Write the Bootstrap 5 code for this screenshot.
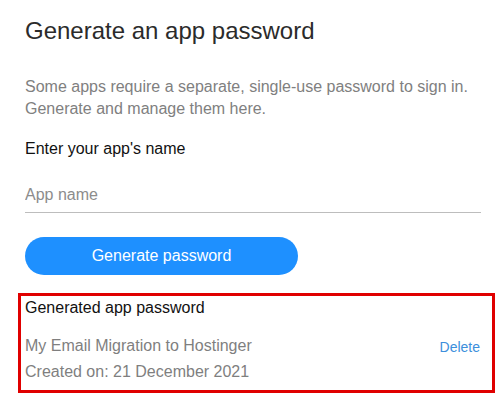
<!DOCTYPE html>
<html lang="en">
<head>
<meta charset="utf-8">
<title>Generate an app password</title>
<link href="https://cdn.jsdelivr.net/npm/bootstrap@5.3.0/dist/css/bootstrap.min.css" rel="stylesheet">
<style>
html,body{height:100%;overflow:hidden}
body{font-family:"Liberation Sans",Arial,sans-serif;background:#fff;color:#111}
.pg{width:503px;height:406px;padding:0 8px 0 18px}
.upper{padding:0 14px 0 7px}
.ttl{font-size:24px;line-height:28px;font-weight:400;color:#2b2b2b;margin:17px 0 0}
.intro{font-size:16px;line-height:22px;color:#808080;margin:31px 0 0}
.lbl{font-size:16px;line-height:20px;color:#111;margin:19px 0 0;display:block}
.name-in{display:block;width:100%;border:0;border-bottom:1px solid #bdbdbd;border-radius:0;padding:0 0 6px;margin-top:25px;font-size:16px;line-height:22px;background:transparent;outline:0;color:#111}
.name-in::placeholder{color:#8c8c8c;opacity:1}
.gen{display:block;width:273px;height:38px;margin-top:24px;padding:0;border:0;border-radius:19px;background:#1e90ff;color:#fff;font-size:16px;line-height:36px}
.box{border:3px solid #e00000;height:100px;margin-top:18px;padding:0 12px 0 4px}
.box-h{font-size:16px;line-height:20px;color:#111;margin:2px 0 0}
.pw-row{margin-top:15px}
.muted-t{font-size:16px;line-height:26px;color:#7f7f7f}
.del{font-size:14px;color:#3c8fdc;text-decoration:none}
</style>
</head>
<body>
<div class="pg">
  <div class="upper">
    <h1 class="ttl">Generate an app password</h1>
    <p class="intro">Some apps require a separate, single-use password to sign in. Generate and manage them here.</p>
    <label class="lbl" for="appn">Enter your app's name</label>
    <input id="appn" class="name-in" type="text" placeholder="App name">
    <button type="button" class="btn gen">Generate password</button>
  </div>
  <section class="box">
    <p class="box-h">Generated app password</p>
    <div class="pw-row d-flex justify-content-between align-items-center">
      <div class="muted-t">My Email Migration to Hostinger<br>Created on: 21 December 2021</div>
      <a class="del mb-4" href="#">Delete</a>
    </div>
  </section>
</div>
<script src="https://cdn.jsdelivr.net/npm/bootstrap@5.3.0/dist/js/bootstrap.bundle.min.js"></script>
</body>
</html>
